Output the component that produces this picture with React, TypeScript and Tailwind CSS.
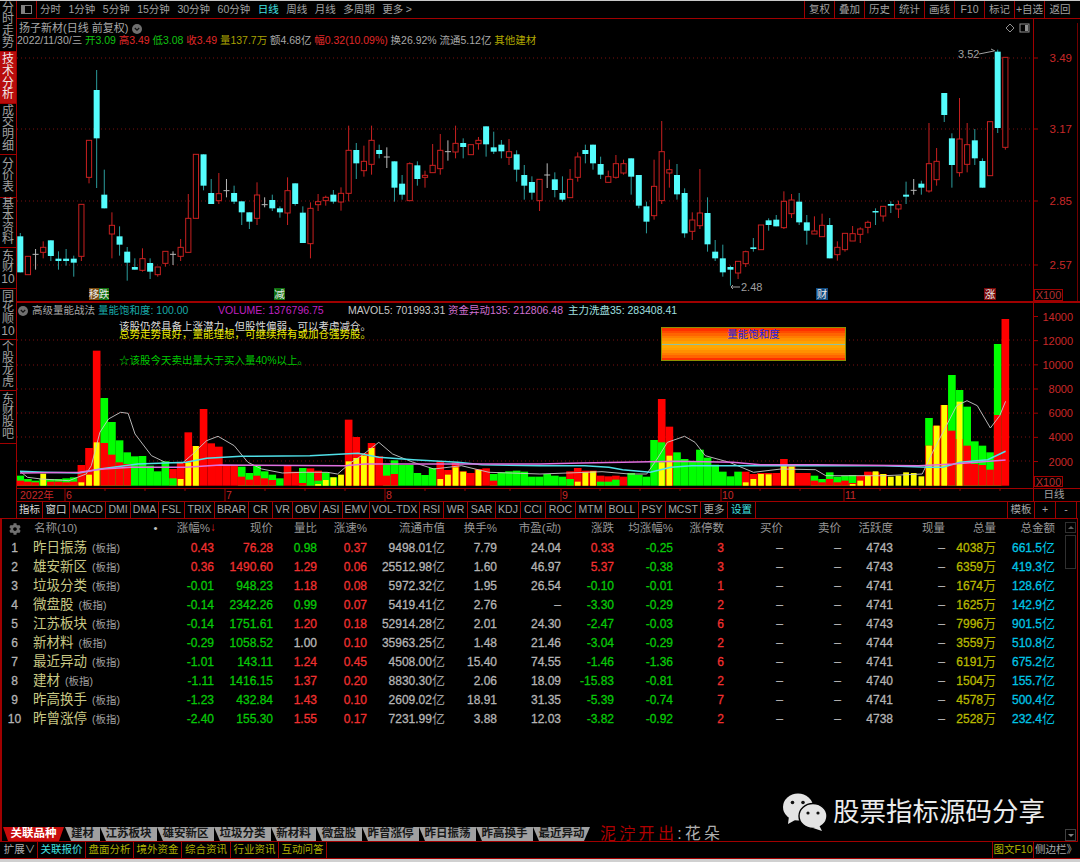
import { FaCog } from 'react-icons/fa'

const DOT = '#7a1010'

// candles: type, wick top, body top, body bottom, wick bottom (y read from a crop starting at 130, 3x)
type Candle = ['c' | 'r' | 'w', number, number, number, number]
const candles: Candle[] = [
  ['c', 312, 322, 430, 430], ['r', 382, 382, 437, 437], ['w', 360, 376, 376, 422], ['r', 337, 355, 370, 388],
  ['c', 334, 334, 381, 396], ['c', 367, 389, 396, 422], ['c', 360, 389, 396, 410], ['c', 380, 389, 401, 443],
  ['r', 226, 226, 382, 396], ['r', 34, 34, 145, 163], ['c', -177, -117, 28, 177], ['c', 122, 197, 238, 238],
  ['r', 250, 289, 315, 388], ['c', 292, 322, 347, 380], ['c', 354, 368, 401, 455], ['c', 388, 414, 422, 422],
  ['r', 358, 389, 424, 428], ['c', 388, 402, 428, 450], ['r', 414, 414, 437, 443], ['r', 367, 367, 403, 413],
  ['w', 367, 376, 376, 408], ['r', 330, 355, 382, 396], ['r', 195, 268, 370, 370], ['r', 76, 76, 268, 268],
  ['c', 76, 76, 170, 184], ['c', 150, 192, 225, 225], ['r', 132, 194, 215, 225], ['w', 150, 185, 185, 205],
  ['c', 170, 192, 218, 225], ['c', 217, 217, 250, 288], ['c', 250, 250, 278, 300], ['r', 160, 198, 268, 288],
  ['w', 205, 227, 227, 235], ['c', 197, 213, 238, 246], ['c', 232, 238, 250, 266], ['r', 145, 185, 252, 288],
  ['c', 163, 163, 225, 230], ['c', 232, 251, 342, 342], ['r', 220, 238, 344, 388], ['r', 195, 218, 227, 246],
  ['r', 200, 205, 215, 230], ['c', 183, 197, 218, 224], ['r', 175, 193, 219, 245], ['r', -10, 64, 193, 217],
  ['c', 42, 63, 103, 150], ['r', 50, 97, 125, 143], ['r', -10, 34, 106, 137], ['c', 47, 63, 75, 88],
  ['w', 55, 84, 84, 117], ['c', 97, 97, 176, 218], ['c', 138, 164, 197, 212], ['r', 100, 104, 215, 215],
  ['c', 97, 109, 150, 170], ['r', 125, 139, 145, 176], ['r', 45, 109, 131, 131], ['r', 15, 64, 119, 137],
  ['w', 34, 68, 68, 95], ['r', -10, 43, 69, 88], ['c', 28, 42, 54, 88], ['r', 47, 47, 77, 77],
  ['r', 24, 34, 44, 62], ['c', -8, -8, 46, 83], ['c', 8, 55, 68, 75], ['c', 33, 47, 67, 88],
  ['r', 30, 68, 85, 108], ['c', 64, 76, 122, 158], ['c', 108, 138, 170, 212], ['c', 142, 159, 191, 212],
  ['r', 151, 151, 215, 246], ['w', 103, 138, 138, 177], ['c', 130, 151, 183, 205], ['c', 142, 192, 212, 218],
  ['r', 120, 151, 206, 206], ['r', 70, 84, 145, 158], ['c', 47, 63, 75, 103], ['c', 47, 47, 103, 122],
  ['c', 83, 105, 137, 150], ['r', 125, 143, 160, 160], ['r', 78, 104, 145, 149], ['r', 92, 104, 132, 137],
  ['c', 88, 88, 143, 197], ['c', 138, 138, 230, 238], ['c', 218, 232, 278, 313], ['r', 92, 172, 260, 272],
  ['r', -24, 68, 215, 225], ['r', 92, 122, 132, 176], ['c', 105, 138, 196, 212], ['c', 178, 192, 313, 326],
  ['r', 250, 273, 307, 333], ['r', 120, 252, 290, 300], ['c', 205, 252, 346, 368], ['c', 333, 368, 388, 396],
  ['c', 347, 388, 430, 443], ['c', 410, 414, 422, 470], ['r', 397, 397, 432, 450], ['r', 365, 368, 404, 414],
  ['c', 327, 355, 360, 368], ['r', 288, 288, 362, 362], ['c', 268, 274, 288, 305], ['c', 258, 272, 292, 292],
  ['r', 187, 217, 296, 300], ['r', 195, 213, 254, 267], ['c', 192, 218, 280, 288], ['c', 258, 280, 305, 347],
  ['r', 262, 306, 315, 315], ['r', 254, 289, 323, 323], ['c', 267, 288, 388, 388], ['r', 337, 355, 377, 395],
  ['r', 313, 313, 362, 368], ['r', 291, 314, 336, 336], ['r', 295, 300, 316, 342], ['r', 275, 280, 295, 313],
  ['c', 238, 246, 250, 288], ['r', 232, 232, 261, 278], ['c', 217, 225, 230, 252], ['r', 215, 227, 240, 267],
  ['c', 158, 197, 203, 225], ['w', 150, 184, 184, 197], ['c', 155, 164, 176, 197], ['r', -18, 104, 186, 191],
  ['r', 57, 97, 152, 170], ['c', -108, -108, -42, -21], ['c', 13, 28, 108, 176], ['r', -93, 30, 131, 143],
  ['r', -18, 47, 106, 130], ['c', 0, 34, 88, 108], ['c', 88, 96, 176, 176], ['r', -22, -22, 140, 140],
  ['c', -238, -232, -3, 12], ['r', -215, -215, 55, 62],
]

// volume bars, tallest first: colour + top (y read from a crop starting at 300, 3x)
const volBars = [
  'g530 r545', 'g540 r548', 'g545 r550', 'g540 y524', 'g540 r548', 'g540 r548', 'g538 r550', 'g535 r548', 'r498 y550', 'r447 y527',
  'r155 y430', 'g297 r432', 'g369 r467', 'g424 r490', 'g460 r495', 'g472', 'g471', 'g500', 'g517', 'g487',
  'r510 g538', 'r490 y540', 'r400 y490', 'r441 y441', 'r330', 'r433', 'r443', 'r500', 'r500', 'g503 r533',
  'g522 r542', 'g500 r530', 'g517 r538', 'g527 r543', 'g538', 'r500', 'r518', 'g507 r552', 'r508 g520', 'r515 g545 y555',
  'g520 y543', 'g535 y535', 'y527', 'r362 y487', 'r414 y477', 'r462 y470', 'r432 y447', 'r472', 'g497 r530', 'g484 r525',
  'g498', 'g498', 'g522', 'g528', 'g507', 'r487 y540', 'r513 y527', 'r490 y505', 'r517 y518', 'r522', 'r510 y513', 'r508',
  'g525 r545', 'g520', 'g517', 'g515', 'g518', 'g533', 'g533', 'g525', 'g530', 'g533', 'r517 g540', 'r507 y548', 'r515 y520',
  'r515 y517', 'r530 g548', 'r532 g548', 'r530 g542', 'r533', 'g522', 'g527', 'g533', 'g423', 'r300 g430 y490', 'r383 y470',
  'g460', 'g480', 'g487', 'g452', 'g476', 'g497', 'g518', 'g532', 'g518', 'r518 y550', 'r525 y540', 'r522 y525', 'r522 y526',
  'r522', 'r480 y495', 'r497 y503', 'r522', 'r522', 'g530 r545', 'g540 r550', 'g520 r540', 'g533 r550', 'g530 r545',
  'g528 r552 y555', 'r530 y545', 'r518 y530', 'r520 y517', 'r525 y525', 'y533', 'y530', 'y520', 'y522', 'y532',
  'g357 r440 y440', 'r380 y380', 'r318 y318', 'g228 r395', 'g273 r420 y308', 'g323 r440', 'g427 r495', 'g440 r498', 'g460 r512',
  'g135 r348', 'r60',
]

const cx = (i: number) => 20.3 + 7.636 * i
const cy = (z: number) => 130 + z / 3
const vy = (z: number) => 300 + z / 3

const toPoints = (left: number[][], right: number[][]) =>
  [...left.map(([x, y]) => [x / 2.904, vy(y)]), ...right.map(([x, y]) => [540 + x / 2.904, vy(y)])]
    .map(([x, y]) => `${x.toFixed(1)},${y.toFixed(1)}`)
    .join(' ')

const whiteLine = toPoints(
  [[58, 517], [80, 535], [120, 540], [200, 545], [250, 525], [265, 500], [290, 400], [315, 360], [350, 340], [372, 343], [392, 405], [440, 470], [480, 490], [530, 492], [560, 465], [600, 425], [633, 412], [680, 440], [720, 490], [760, 510], [820, 522], [880, 520], [950, 520], [980, 525], [1020, 490], [1050, 470], [1100, 430], [1140, 465], [1200, 490], [1260, 510], [1340, 500], [1420, 520], [1568, 525]],
  [[80, 522], [180, 518], [260, 525], [310, 525], [340, 480], [370, 430], [420, 412], [450, 430], [480, 470], [550, 490], [620, 520], [700, 510], [800, 512], [830, 530], [1000, 530], [1110, 525], [1140, 460], [1210, 320], [1240, 305], [1270, 320], [1308, 387], [1335, 350], [1352, 307]],
)
const cyanLine = toPoints(
  [[58, 517], [130, 520], [230, 522], [290, 510], [400, 495], [540, 490], [600, 478], [700, 472], [900, 470], [1040, 463], [1100, 475], [1200, 482], [1330, 490], [1400, 497], [1568, 500]],
  [[130, 500], [200, 505], [240, 512], [320, 520], [380, 505], [440, 500], [600, 500], [780, 500], [1000, 500], [1130, 505], [1170, 505], [1220, 490], [1300, 482], [1352, 457]],
)
const pinkLine = toPoints(
  [[58, 522], [230, 520], [300, 510], [380, 505], [540, 505], [640, 498], [1000, 500], [1060, 495], [1300, 495], [1568, 495]],
  [[120, 492], [400, 487], [560, 490], [640, 497], [800, 497], [1100, 500], [1200, 495], [1352, 483]],
)

const sideTabs = [
  { label: '分时走势', h: 'h-[51px]' },
  { label: '技术分析', h: 'h-[52px]', active: true },
  { label: '成交明细', h: 'h-[51px]' },
  { label: '分价表', h: 'h-[43px]' },
  { label: '基本资料', h: 'h-[50px]' },
  { label: '东财10', h: 'h-[41px]' },
  { label: '同花顺10', h: 'h-[51px]' },
  { label: '个股龙虎', h: 'h-[51px]' },
  { label: '东财股吧', h: 'h-[53px]' },
]

const periods = ['分时', '1分钟', '5分钟', '15分钟', '30分钟', '60分钟', '日线', '周线', '月线', '多周期', '更多']
const toolButtons = ['复权', '叠加', '历史', '统计', '画线', 'F10', '标记', '+自选', '返回']

const quote: [string, string][] = [
  ['2022/11/30/三', 'text-[#a8a8a8]'], ['开3.09', 'text-[#10c010]'], ['高3.49', 'text-[#e02828]'], ['低3.08', 'text-[#10c010]'],
  ['收3.49', 'text-[#e02828]'], ['量137.7万', 'text-[#a8a000]'], ['额4.68亿', 'text-[#a8a8a8]'], ['幅0.32(10.09%)', 'text-[#e02828]'],
  ['换26.92%', 'text-[#a8a8a8]'], ['流通5.12亿', 'text-[#a8a8a8]'], ['其他建材', 'text-[#b0a800]'],
]

const indicators = [
  ['指标', 'w-[26px]'], ['窗口', 'w-[27px]'], ['MACD', 'w-[36px]'], ['DMI', 'w-[25px]'], ['DMA', 'w-[28px]'], ['FSL', 'w-[26px]'],
  ['TRIX', 'w-[30px]'], ['BRAR', 'w-[34px]'], ['CR', 'w-[24px]'], ['VR', 'w-[20px]'], ['OBV', 'w-[27px]'], ['ASI', 'w-[23px]'],
  ['EMV', 'w-[27px]'], ['VOL-TDX', 'w-[50px]'], ['RSI', 'w-[24px]'], ['WR', 'w-[24px]'], ['SAR', 'w-[28px]'], ['KDJ', 'w-[25px]'],
  ['CCI', 'w-[25px]'], ['ROC', 'w-[30px]'], ['MTM', 'w-[30px]'], ['BOLL', 'w-[33px]'], ['PSY', 'w-[27px]'], ['MCST', 'w-[35px]'],
  ['更多', 'w-[27px]'], ['设置', 'w-[28px]'],
]

const columns = ['涨幅%', '现价', '量比', '涨速%', '流通市值', '换手%', '市盈(动)', '涨跌', '均涨幅%', '涨停数', '买价', '卖价', '活跃度', '现量', '总量', '总金额']
const gridCols = 'grid-cols-[27px_142px_44px_59px_44px_50px_78px_52px_64px_53px_59px_51px_59px_58px_52px_52px_51px_59px]'

const rows = [
  ['昨日振荡', '0.43', '76.28', '0.98', '0.37', '9498.01', '7.79', '24.04', '0.33', '-0.25', '3', '4743', '4038', '661.5'],
  ['雄安新区', '0.36', '1490.60', '1.29', '0.06', '25512.98', '1.60', '46.97', '5.37', '-0.38', '3', '4743', '6359', '419.3'],
  ['垃圾分类', '-0.01', '948.23', '1.18', '0.08', '5972.32', '1.95', '26.54', '-0.10', '-0.01', '1', '4741', '1674', '128.6'],
  ['微盘股', '-0.14', '2342.26', '0.99', '0.07', '5419.41', '2.76', '–', '-3.30', '-0.29', '2', '4741', '1625', '142.9'],
  ['江苏板块', '-0.14', '1751.61', '1.20', '0.18', '52914.28', '2.01', '24.30', '-2.47', '-0.03', '6', '4743', '7996', '901.5'],
  ['新材料', '-0.29', '1058.52', '1.00', '0.10', '35963.25', '1.48', '21.46', '-3.04', '-0.29', '2', '4744', '3559', '510.8'],
  ['最近异动', '-1.01', '143.11', '1.24', '0.45', '4508.00', '15.40', '74.55', '-1.46', '-1.36', '6', '4741', '6191', '675.2'],
  ['建材', '-1.11', '1416.15', '1.37', '0.20', '8830.30', '2.06', '18.09', '-15.83', '-0.81', '2', '4740', '1504', '155.7'],
  ['昨高换手', '-1.23', '432.84', '1.43', '0.10', '2609.02', '18.91', '31.35', '-5.39', '-0.74', '7', '4741', '4578', '500.4'],
  ['昨曾涨停', '-2.40', '155.30', '1.55', '0.17', '7231.99', '3.88', '12.03', '-3.82', '-0.92', '2', '4738', '2528', '232.4'],
]

const signColor = (v: string) => (v.startsWith('-') ? 'text-[#08c808]' : 'text-[#f03030]')
const ratioColor = (v: string) => (v === '1.00' ? 'text-[#b8b8b8]' : Number(v) < 1 ? 'text-[#08c808]' : 'text-[#f03030]')

const bottomTabs = [
  ['建材', 'w-[35px]'], ['江苏板块', 'w-[57px]'], ['雄安新区', 'w-[57px]'], ['垃圾分类', 'w-[57px]'], ['新材料', 'w-[45px]'],
  ['微盘股', 'w-[46px]'], ['昨曾涨停', 'w-[57px]'], ['昨日振荡', 'w-[57px]'], ['昨高换手', 'w-[57px]'],
]
const bottomLinks = [
  ['扩展∨', 'w-[36px] text-[#b0b0b0]'], ['关联报价', 'w-[48px] text-[#40e0e0]'], ['盘面分析', 'w-[48px] text-[#b0b000]'], ['境外资金', 'w-[48px] text-[#b0b000]'],
  ['综合资讯', 'w-[49px] text-[#b0b000]'], ['行业资讯', 'w-[48px] text-[#b0b000]'], ['互动问答', 'w-[48px] text-[#b0b000]'],
]

const bands = ['#ff3000', '#ff4a00', '#ff6400', '#ff7c00', '#ff9000', '#ffa000', '#ffa800', '#ffa800', '#ffa000', '#ff9000', '#ff7c00', '#ff6400', '#ff3000']
const volTicks = [14000, 12000, 10000, 8000, 6000, 4000, 2000]
const minorTicks = [105, 145, 185, 265, 305, 345, 425, 465, 510, 600, 640, 680, 760, 800, 880, 920, 960, 1000]
const months: [string, number][] = [['6', 65], ['7', 225], ['8', 385], ['9', 561], ['10', 721], ['11', 844]]

function CircleChevron({ className }: { className: string }) {
  return (
    <svg viewBox="0 0 10 10" className={className}>
      <circle cx="5" cy="5" r="5" fill="#707070" />
      <path d="M2.8 4 L5 6.2 L7.2 4" fill="none" stroke="#111" strokeWidth="1.2" />
    </svg>
  )
}

function PriceChart() {
  return (
    <svg viewBox="17 20 1016 282" className="w-[1016px] h-[282px] block">
      {[59, 130, 202, 266].map((y) => (
        <line key={y} x1="17" x2="1033" y1={y} y2={y} stroke={DOT} strokeDasharray="1 3" />
      ))}
      {candles.map(([type, wt, bt, bb, wb], i) => {
        const x = cx(i)
        if (type === 'w') {
          return (
            <g key={i} stroke="#b8b8b8">
              <line x1={x} x2={x} y1={cy(wt)} y2={cy(wb)} />
              <line x1={x - 3} x2={x + 3} y1={cy(bt)} y2={cy(bt)} />
            </g>
          )
        }
        if (type === 'c') {
          return (
            <g key={i}>
              <line x1={x} x2={x} y1={cy(wt)} y2={cy(wb)} stroke="#2b9c9c" />
              <rect x={x - 3} y={cy(bt)} width="6" height={Math.max(cy(bb) - cy(bt), 1.5)} fill="#54fcfc" />
            </g>
          )
        }
        return (
          <g key={i}>
            <line x1={x} x2={x} y1={cy(wt)} y2={cy(wb)} stroke="#c82020" />
            <rect x={x - 2.6} y={cy(bt)} width="5.2" height={cy(bb) - cy(bt)} fill="#000" stroke="#c82020" />
          </g>
        )
      })}
      <g fontSize="11" fill="#a0a0a0" fontFamily="Liberation Sans">
        <text x="958" y="59">3.52</text>
        <path d="M979 55 L994 52 M991 50 L995 52" stroke="#a0a0a0" fill="none" />
        <text x="741" y="292">2.48</text>
        <path d="M731 288 L740 288 M733 286 L731 288 L733 290" stroke="#a0a0a0" fill="none" />
      </g>
      <g fontSize="10.5" fill="#e8e8e8" textAnchor="middle" fontFamily="Noto Sans CJK SC">
        <rect x="89" y="289" width="10" height="12" fill="#7a4a10" />
        <rect x="99" y="289" width="10" height="12" fill="#107010" />
        <rect x="274" y="289" width="11" height="12" fill="#107010" />
        <rect x="816" y="289" width="12" height="12" fill="#104a80" />
        <rect x="984" y="289" width="12" height="12" fill="#7a0808" />
        <text x="94" y="299">移</text>
        <text x="104" y="299">跌</text>
        <text x="279.5" y="299">减</text>
        <text x="822" y="299">财</text>
        <text x="990" y="299">涨</text>
      </g>
      <path d="M1010 25 L1014 29 L1010 33 L1006 29 Z" fill="none" stroke="#909090" />
      <rect x="1020" y="25" width="9" height="8" fill="none" stroke="#909090" />
      <rect x="1025" y="26" width="3" height="6" fill="#909090" />
    </svg>
  )
}

function VolumeChart() {
  return (
    <svg viewBox="17 303 1016 186" className="w-[1016px] h-[186px] block">
      {[341, 366, 390, 414, 438, 462].map((y) => (
        <line key={y} x1="17" x2="1033" y1={y} y2={y} stroke={DOT} strokeDasharray="1 3" />
      ))}
      {volBars.map((bar, i) =>
        bar.split(' ').map((part) => {
          const kind = part[0]
          const top = vy(Number(part.slice(1)))
          const narrow = kind === 'y'
          return (
            <rect
              key={`${i}${kind}`}
              x={cx(i) - (narrow ? 2.9 : 3.82)}
              y={top}
              width={narrow ? 5.8 : 7.64}
              height={486.7 - top}
              fill={kind === 'g' ? '#00ff00' : kind === 'r' ? '#ff0000' : '#ffff00'}
            />
          )
        }),
      )}
      <polyline points={whiteLine} fill="none" stroke="#c8c8c8" strokeWidth="0.9" />
      <polyline points={cyanLine} fill="none" stroke="#50e0e8" strokeWidth="1.5" />
      <polyline points={pinkLine} fill="none" stroke="#e070e0" strokeWidth="1.5" />
    </svg>
  )
}

function TableRow({ row, index }: { row: string[]; index: number }) {
  const [name, pct, price, ratio, speed, cap, turn, pe, change, avg, limit, active, vol, amount] = row
  return (
    <div className={`grid ${gridCols} h-[19px] items-center text-right text-[12px] [-webkit-text-stroke:0.3px] text-[#b4b4b4] whitespace-nowrap`}>
      <span className="text-center">{index + 1}</span>
      <span className="pl-[5px] text-left [-webkit-text-stroke:0]">
        <span className="text-[13.5px] text-[#c8c884]">{name}</span>
        <span className="ml-[5px] text-[10.5px] text-[#a0a0a0]">(板指)</span>
      </span>
      <span className={signColor(pct)}>{pct}</span>
      <span className={signColor(pct)}>{price}</span>
      <span className={ratioColor(ratio)}>{ratio}</span>
      <span className={signColor(speed)}>{speed}</span>
      <span>
        {cap}
        <span className="text-[13px] text-[#a0a0a0] [-webkit-text-stroke:0]">亿</span>
      </span>
      <span>{turn}</span>
      <span>{pe}</span>
      <span className={signColor(change)}>{change}</span>
      <span className={signColor(avg)}>{avg}</span>
      <span className="text-[#f03030]">{limit}</span>
      <span>–</span>
      <span>–</span>
      <span>{active}</span>
      <span>–</span>
      <span className="text-[#b8b800]">
        {vol}
        <span className="text-[13px] [-webkit-text-stroke:0]">万</span>
      </span>
      <span className="text-[#00c4e4]">
        {amount}
        <span className="text-[13px] [-webkit-text-stroke:0]">亿</span>
      </span>
    </div>
  )
}

export default function App() {
  return (
    <div className="w-[1080px] h-[862px] bg-black flex flex-col overflow-hidden font-['Liberation_Sans','Noto_Sans_CJK_SC',sans-serif] text-[10.5px] text-[#b0b0b0]">
      <div className="h-[1px] bg-[#c8c8c8]" />

      <div className="h-[517px] flex">
        {/* left tab rail */}
        <div className="w-[17px] border-r border-[#a00000] flex flex-col">
          {sideTabs.map((t) => (
            <div
              key={t.label}
              className={`${t.h} border-b border-[#a00000] flex items-center justify-center text-center text-[12px] leading-[11.6px] break-all ${t.active ? 'bg-[#b80c0c] text-[#f0e8e8]' : 'text-[#a0a0a0]'}`}
            >
              <span className="w-[14px]">{t.label}</span>
            </div>
          ))}
        </div>

        <div className="flex-1 flex flex-col">
          {/* toolbar */}
          <div className="h-[19px] border-b border-[#a00000] flex items-center text-[#a0a0a0]">
            <div className="w-[20px] h-full border-r border-[#a00000] flex items-center justify-center">
              <div className="w-[11px] h-[9px] border border-[#808080] bg-black flex">
                <div className="w-[3px] bg-[#808080]" />
              </div>
            </div>
            <div className="ml-[3px] flex items-center gap-[7.5px]">
              {periods.map((p) => (
                <span key={p} className={p === '日线' ? 'text-[#40e0e0]' : ''}>{p}</span>
              ))}
              <span className="-ml-[5px] text-[#a0a0a0]">&gt;</span>
            </div>
            <div className="ml-auto flex h-full mr-[5px] border-l border-[#a00000]">
              {toolButtons.map((b) => (
                <div key={b} className="w-[30px] border-r border-[#a00000] last:border-r-0 flex items-center justify-center">{b}</div>
              ))}
            </div>
          </div>

          {/* price pane */}
          <div className="h-[282px] flex">
            <div className="relative w-[1016px]">
              <PriceChart />
              <div className="absolute left-[2px] top-[1px] flex items-center gap-[4px] text-[11px] text-[#a8a8a8]">
                <span>扬子新材(日线 前复权)</span>
                <CircleChevron className="w-[10px] h-[10px]" />
              </div>
              <div className="absolute left-0 top-[14px] flex gap-[2.8px] whitespace-nowrap">
                {quote.map(([text, color]) => (
                  <span key={text} className={color}>{text}</span>
                ))}
              </div>
            </div>
            <div className="relative flex-1 border-l border-[#a00000]">
              <svg viewBox="1034 20 46 282" className="w-[46px] h-[282px] block">
                {[59, 130, 202, 266].map((y, i) => (
                  <g key={y}>
                    <line x1="1034" x2="1038" y1={y} y2={y} stroke="#a00000" />
                    <text x="1072" y={y + 4} textAnchor="end" fontSize="11.5" fill="#c82828" fontFamily="Liberation Sans">
                      {['3.49', '3.17', '2.85', '2.57'][i]}
                    </text>
                  </g>
                ))}
                <line x1="1077.5" x2="1077.5" y1="24" y2="302" stroke="#700000" />
              </svg>
              <div className="absolute left-0 bottom-0 w-[29px] h-[12px] border border-[#a00000] flex items-center justify-center text-[11px] text-[#b03030]">X100</div>
            </div>
          </div>

          {/* volume pane */}
          <div className="h-[187px] flex border-t-2 border-[#a00000]">
            <div className="relative w-[1016px] -mt-[1px]">
              <VolumeChart />
              <div className="absolute left-0 top-[1px] flex items-center whitespace-nowrap">
                <CircleChevron className="ml-[1px] w-[10px] h-[10px]" />
                <span className="w-[70px] pl-[4px] text-[#a8a8a8]">高级量能战法</span>
                <span className="w-[120px] text-[#18a8a8]">量能饱和度: 100.00</span>
                <span className="w-[130px] text-[#c020c0]">VOLUME: 1376796.75</span>
                <span className="w-[100px] text-[#c8c8c8]">MAVOL5: 701993.31</span>
                <span className="w-[120px] text-[#d070d0]">资金异动135: 212806.48</span>
                <span className="text-[#a0e0e0]">主力洗盘35: 283408.41</span>
              </div>
              <div className="absolute left-[102px] top-[17px] text-[#d8d8d8]">该股仍然具备上涨潜力，但股性偏弱，可以考虑减仓。</div>
              <div className="absolute left-[102px] top-[25px] text-[#e8e800]">总势走势良好，量能理想，可继续持有或加仓强势股。</div>
              <div className="absolute left-[102px] top-[51px] text-[#00c800]">☆该股今天卖出量大于买入量40%以上。</div>
              <div className="absolute left-[644px] top-[25px] w-[185px] h-[34px] border border-[#909000] flex flex-col">
                {bands.map((c, i) => (
                  <div key={i} className="flex-1" style={{ backgroundColor: c }} />
                ))}
                <div className="absolute inset-x-0 top-[16px] h-[1px] bg-[#90c0a0]" />
                <div className="absolute inset-x-0 top-[-1px] text-center text-[#2020e0]">量能饱和度</div>
              </div>
            </div>
            <div className="relative flex-1 border-l border-[#a00000]">
              <svg viewBox="1034 304 46 185" className="w-[46px] h-[185px] block">
                {volTicks.map((v, i) => (
                  <g key={v}>
                    <line x1="1034" x2="1038" y1={317.5 + i * 24.17} y2={317.5 + i * 24.17} stroke="#a00000" />
                    <text x="1073" y={321.5 + i * 24.17} textAnchor="end" fontSize="11" fill="#c82828" fontFamily="Liberation Sans">{v}</text>
                  </g>
                ))}
              </svg>
              <div className="absolute left-0 bottom-[1px] w-[29px] h-[11px] border border-[#a00000] flex items-center justify-center text-[11px] text-[#b03030]">X100</div>
            </div>
          </div>

          {/* month axis */}
          <div className="h-[14px] flex border-y border-[#a00000]">
            <svg viewBox="17 491 1016 12" className="w-[1016px] h-[12px] block">
              <text x="20" y="501" fontSize="10.5" fill="#c82828" fontFamily="Liberation Sans, Noto Sans CJK SC">2022年</text>
              {minorTicks.map((x) => (
                <line key={x} x1={x} x2={x} y1="491" y2="493" stroke="#a00000" />
              ))}
              {months.map(([m, x]) => (
                <g key={m}>
                  <line x1={x} x2={x} y1="491" y2="503" stroke="#a00000" />
                  <text x={x + 1} y="501" fontSize="10.5" fill="#c82828" fontFamily="Liberation Sans">{m}</text>
                </g>
              ))}
            </svg>
            <div className="flex-1 border-l border-[#a00000] flex items-center justify-center pr-[6px] text-[#a0a0a0]">日线</div>
          </div>

          {/* indicator tabs */}
          <div className="flex-1 flex items-stretch text-[#a8a8a8]">
            {indicators.map(([name, w], i) => (
              <div
                key={name}
                className={`${w} shrink-0 border-r border-[#a00000] flex items-center justify-center whitespace-nowrap ${name === '设置' ? 'text-[#40e0e0]' : i < 2 ? 'text-[#d8d8d8]' : ''}`}
              >
                {name}
              </div>
            ))}
            <div className="ml-auto w-[27px] border-l border-[#a00000] flex items-center justify-center">模板</div>
            <div className="w-[21px] border-l border-[#a00000] flex items-center justify-center">+</div>
            <div className="w-[21px] border-l border-[#a00000] flex items-center justify-center">-</div>
            <div className="w-[4px] border-l border-[#a00000]" />
          </div>
        </div>
      </div>

      {/* quote table */}
      <div className="relative h-[324px] border-y border-[#a00000] border-l-2 border-r mr-[2px] flex flex-col">
        <div className={`grid ${gridCols} h-[19px] items-center text-right text-[11.5px] text-[#989898] whitespace-nowrap -ml-[1px]`}>
          <span className="flex justify-center">
            <FaCog className="w-[12px] h-[12px] text-[#707070]" />
          </span>
          <span className="pl-[6px] flex text-left">
            <span>名称(10)</span>
            <span className="ml-[76px] text-[#c0c0c0]">•</span>
          </span>
          {columns.map((c) => (
            <span key={c} className={c === '涨幅%' ? 'pr-[4px] relative' : ''}>
              {c}
              {c === '涨幅%' && <span className="absolute right-[-2px] top-[-1px] text-[#e02020]">↓</span>}
            </span>
          ))}
        </div>
        <div className="-ml-[1px]">
          {rows.map((row, i) => (
            <TableRow key={row[0]} row={row} index={i} />
          ))}
        </div>

        {/* scrollbar */}
        <div className="absolute right-[1px] top-[3px] w-[11px] h-[11px] border border-[#303030] flex items-center justify-center">
          <div className="border-x-[3px] border-b-[3px] border-x-transparent border-b-[#606060]" />
        </div>
        <div className="absolute right-[1px] top-[16px] w-[11px] h-[34px] border border-[#303030]" />
        <div className="absolute right-[1px] bottom-[0px] w-[11px] h-[12px] border border-[#404040] flex items-center justify-center">
          <div className="border-x-[3px] border-t-[3px] border-x-transparent border-t-[#808080]" />
        </div>

        {/* watermark */}
        <div className="absolute left-[781px] top-[274px] flex items-center">
          <svg viewBox="0 0 44 38" className="w-[44px] h-[38px]">
            <ellipse cx="15" cy="14" rx="15" ry="13.5" fill="#e4e4e4" />
            <path d="M6 23 L5 31 L14 26 Z" fill="#e4e4e4" />
            <circle cx="9.5" cy="9.5" r="1.8" fill="#111" />
            <circle cx="20" cy="9.5" r="1.8" fill="#111" />
            <ellipse cx="30" cy="23" rx="14" ry="12.5" fill="#e4e4e4" stroke="#000" strokeWidth="1.4" />
            <path d="M36 32 L39 38 L30 35 Z" fill="#e4e4e4" />
            <circle cx="25" cy="20" r="1.6" fill="#111" />
            <circle cx="35" cy="20" r="1.6" fill="#111" />
          </svg>
          <span className="ml-[6px] text-[26.5px] leading-none text-[#ececec] whitespace-nowrap">股票指标源码分享</span>
        </div>

        {/* sector tabs */}
        <div className="mt-auto h-[14px] flex items-stretch pl-[1px] font-bold text-[11.5px] text-[#181818] whitespace-nowrap">
          <div className="w-[61px] mr-[1px] bg-[#c80c0c] text-white flex items-center justify-center [clip-path:polygon(0_0,100%_0,calc(100%-5px)_100%,5px_100%)]">关联品种</div>
          {bottomTabs.map(([name, w]) => (
            <div key={name} className={`${w} bg-[#a0a0a0] flex items-center justify-center [clip-path:polygon(0_0,100%_0,100%_100%,6px_100%)]`}>{name}</div>
          ))}
          <div className="w-[57px] bg-[#a0a0a0] flex items-center justify-center [clip-path:polygon(0_0,100%_0,calc(100%-6px)_100%,6px_100%)]">最近异动</div>
          <div className="ml-[10px] flex items-center font-normal text-[16px] tracking-[3.3px]">
            <span className="text-[#b00000]">泥泞开出</span>
            <span className="text-[#b0b0b0] tracking-normal">:</span>
            <span className="ml-[3px] text-[#b0b0b0]">花朵</span>
          </div>
        </div>
      </div>

      {/* bottom bar */}
      <div className="h-[17px] border-b border-[#a00000] flex items-stretch pl-[2px] whitespace-nowrap">
        {bottomLinks.map(([name, cls]) => (
          <div key={name} className={`${cls} border-r border-[#a00000] flex items-center justify-center text-[10.5px]`}>{name}</div>
        ))}
        <div className="ml-auto w-[41px] border-l border-[#a00000] flex items-center justify-center text-[#b0b000] text-[10.5px]">图文F10</div>
        <div className="w-[47px] border-l border-[#a00000] flex items-center pl-[1px] text-[10.5px] text-[#a8a8a8]">侧边栏》</div>
      </div>
      <div className="flex-1 bg-[#d0d0d0]" />
    </div>
  )
}
